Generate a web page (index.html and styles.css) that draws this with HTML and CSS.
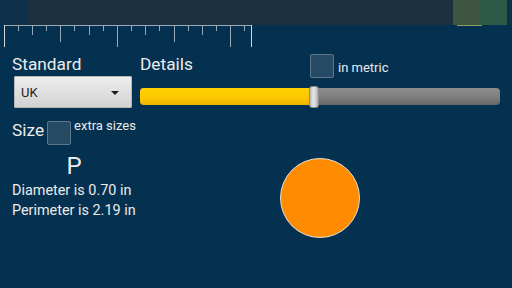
FILE: index.html
```html
<!DOCTYPE html>
<html lang="en">
<head>
    <meta charset="UTF-8">
    <meta name="viewport" content="width=device-width, initial-scale=1.0">
    <title>Ring Size</title>
    <link rel="stylesheet" href="styles.css">
</head>
<body>
    <div class="statusbar">
        <div class="status-edge"></div>
        <div class="status-fill"></div>
        <div class="status-app active"></div>
        <div class="status-app"></div>
        <div class="status-edge small"></div>
    </div>

    <svg class="ruler" width="256" height="22" viewBox="0 0 256 22">
        <g stroke="#9aa9b5" stroke-width="1">
            <line x1="4" y1="0.5" x2="252" y2="0.5" />
            <line x1="4.5" y1="0" x2="4.5" y2="22" stroke="#d0d8de" />
            <line x1="18.5" y1="0" x2="18.5" y2="6" />
            <line x1="32.5" y1="0" x2="32.5" y2="10" />
            <line x1="46.5" y1="0" x2="46.5" y2="6" />
            <line x1="60.5" y1="0" x2="60.5" y2="17" />
            <line x1="74.5" y1="0" x2="74.5" y2="6" />
            <line x1="89.5" y1="0" x2="89.5" y2="10" />
            <line x1="103.5" y1="0" x2="103.5" y2="6" />
            <line x1="117.5" y1="0" x2="117.5" y2="22" />
            <line x1="131.5" y1="0" x2="131.5" y2="6" />
            <line x1="145.5" y1="0" x2="145.5" y2="10" />
            <line x1="159.5" y1="0" x2="159.5" y2="6" />
            <line x1="174.5" y1="0" x2="174.5" y2="17" />
            <line x1="188.5" y1="0" x2="188.5" y2="6" />
            <line x1="202.5" y1="0" x2="202.5" y2="10" />
            <line x1="216.5" y1="0" x2="216.5" y2="6" />
            <line x1="230.5" y1="0" x2="230.5" y2="22" />
            <line x1="244.5" y1="0" x2="244.5" y2="6" />
            <line x1="251.5" y1="0" x2="251.5" y2="22" stroke="#d0d8de" />
        </g>
    </svg>

    <main class="panel">
        <section class="col-left">
            <div class="label">Standard</div>
            <div class="select">
                <span>UK</span>
                <svg width="8" height="4" viewBox="0 0 8 4"><path d="M0 0h8L4 4z" fill="#1a1a1a" /></svg>
            </div>
            <div class="size-row">
                <span class="label">Size</span>
                <span class="check"></span>
                <span class="small">extra sizes</span>
            </div>
            <div class="letter">P</div>
            <div class="info">Diameter is 0.70 in</div>
            <div class="info">Perimeter is 2.19 in</div>
        </section>

        <section class="col-right">
            <div class="details-row">
                <span class="label">Details</span>
                <span class="metric">
                    <span class="check"></span>
                    <span class="small">in metric</span>
                </span>
            </div>
            <div class="slider">
                <div class="track">
                    <div class="track-fill" style="width: 174px"></div>
                </div>
                <div class="thumb" style="left: 169px"></div>
            </div>
            <div class="ring"></div>
        </section>
    </main>
</body>
</html>
```

FILE: styles.css
```css
body {
    margin: 0;
    width: 512px;
    height: 288px;
    overflow: hidden;
    background: #04314f;
    color: #ebebeb;
    font-family: Roboto, 'Noto Sans', sans-serif;
}

.statusbar {
    display: flex;
    height: 25px;
}

.status-edge {
    width: 27px;
    background: #0e3049;
}

.status-edge.small {
    width: 5px;
}

.status-fill {
    flex: 1;
    background: #1c3140;
}

.status-app {
    width: 27px;
    background: #2d5947;
}

.status-app.active {
    background: #3d5541;
    position: relative;
}

.status-app.active::after {
    content: '';
    position: absolute;
    left: 4px;
    width: 25px;
    bottom: -1px;
    height: 1px;
    background: #87a062;
}

.ruler {
    display: block;
}

.panel {
    display: grid;
    grid-template-columns: 128px 360px;
    padding: 7px 12px 0;
}

.label {
    font-size: 17.3px;
    line-height: 20px;
}

.small {
    font-size: 13px;
    line-height: 16px;
}

.select {
    margin: 2px 0 0 2px;
    width: 118px;
    height: 32px;
    box-sizing: border-box;
    display: flex;
    align-items: center;
    justify-content: space-between;
    padding: 0 12px 0 6px;
    background: linear-gradient(#eeeeee, #d2d2d2);
    border: 1px solid #b8b8b8;
    border-radius: 1px;
    color: #222;
    font-size: 13px;
}

.select svg {
    margin-top: 1px;
}

.size-row {
    display: flex;
    align-items: flex-start;
    margin-top: 12px;
    height: 25px;
}

.check {
    width: 24px;
    height: 24px;
    box-sizing: border-box;
    background: #264c65;
    border: 1.5px solid #5f7788;
    border-radius: 2px;
}

.size-row .check {
    margin: 1px 3px 0 3px;
}

.size-row .small {
    margin-top: -2px;
}

.letter {
    width: 124px;
    margin-top: 7px;
    text-align: center;
    font-size: 24px;
    line-height: 28px;
}

.info {
    font-size: 14.4px;
    line-height: 19.6px;
}

.letter + .info {
    margin-top: 1px;
}

.details-row {
    display: grid;
    grid-template-columns: 170px auto;
    height: 24px;
}

.metric {
    display: flex;
    align-items: flex-start;
    column-gap: 4px;
}

.metric .small {
    margin-top: 6px;
}

.slider {
    position: relative;
    margin-top: 8px;
    height: 22px;
}

.track {
    position: absolute;
    left: 0;
    right: 0;
    top: 2px;
    height: 17px;
    border-radius: 4px;
    overflow: hidden;
    background: linear-gradient(#8d8d8d, #7c7c7c 60%, #666);
}

.track-fill {
    height: 100%;
    background: linear-gradient(#ffd200, #fcc800 60%, #eeb300);
}

.thumb {
    position: absolute;
    top: 0;
    width: 10px;
    height: 22px;
    box-sizing: border-box;
    border: 1px solid #8a8a8a;
    border-radius: 3px;
    background: linear-gradient(90deg, #b9b9b9, #e6e6e6 40%, #d4d4d4 70%, #a8a8a8);
}

.ring {
    margin: 50px 0 0 140px;
    width: 80px;
    height: 80px;
    box-sizing: border-box;
    border-radius: 50%;
    background: #ff8c00;
    border: 1px solid #e8e0d8;
}
```
